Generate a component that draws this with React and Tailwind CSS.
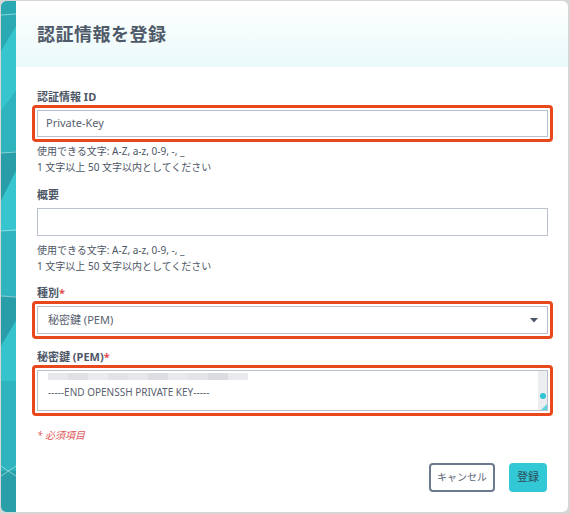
import React from 'react';

const font = { fontFamily: '"Noto Sans", "Noto Sans CJK JP", sans-serif' };

// decorative teal band on the left edge of the dialog
const SideBand = () => (
  <svg width="15" height="511" viewBox="0 0 15 511" className="block shrink-0">
    <rect width="15" height="511" fill="#2fb6c0" />
    <polygon points="0,0 15,0 15,30 0,50" fill="#2aa9b3" />
    <polygon points="0,50 15,25 15,90 0,110" fill="#36c4cd" />
    <polygon points="0,110 15,90 15,150 0,152" fill="#2fb3bd" />
    <polygon points="0,152 15,150 15,170 0,200" fill="#2a9ea8" />
    <polygon points="0,200 15,170 15,230 0,230" fill="#37c6cf" />
    <polygon points="0,230 15,230 15,295 0,295" fill="#30b4be" />
    <polygon points="0,295 15,295 15,320 0,345" fill="#2a9ea8" />
    <polygon points="0,345 15,320 15,380 0,380" fill="#36c3cc" />
    <polygon points="0,380 15,380 15,470 0,470" fill="#2fb3bd" />
    <polygon points="0,470 15,470 15,511 0,511" fill="#2a9fa9" />
    <line x1="0" y1="14" x2="15" y2="13" stroke="#bff0f2" strokeWidth="0.6" />
    <line x1="0" y1="152" x2="15" y2="151" stroke="#bff0f2" strokeWidth="0.6" />
    <line x1="0" y1="230" x2="15" y2="229" stroke="#bff0f2" strokeWidth="0.6" />
    <line x1="0" y1="295" x2="15" y2="296" stroke="#bff0f2" strokeWidth="0.6" />
    <line x1="0" y1="465" x2="15" y2="475" stroke="#bff0f2" strokeWidth="0.6" />
    <line x1="0" y1="475" x2="15" y2="465" stroke="#bff0f2" strokeWidth="0.6" />
  </svg>
);

const Label = ({ children, required }) => (
  <div className="text-[11px] leading-[16px] font-bold text-[#4d5666]">
    {children}
    {required && <span className="text-[#e0474c]">*</span>}
  </div>
);

const Frame = ({ highlight, children }) => (
  <div
    className={
      'mx-[-5px] border-[3px] rounded-[4px] p-[2px] ' +
      (highlight ? 'border-[#e8481c]' : 'border-transparent')
    }
  >
    {children}
  </div>
);

const Help = () => (
  <div className="mt-[1px] text-[10px] leading-[16px] text-[#4d5666]">
    <div>使用できる文字: A-Z, a-z, 0-9, -, _</div>
    <div>1 文字以上 50 文字以内としてください</div>
  </div>
);

const blurBlocks = ['#e6e8eb', '#dfe1e5', '#e9ebee', '#e1e3e7', '#e5e7ea', '#dcdee3', '#e7e9ec', '#e2e4e8', '#dadce1', '#e8eaed'];

export default function App() {
  return (
    <div className="w-[570px] h-[514px] bg-[#d6d6d6] pt-[1px] pl-[1px] pr-[2px] pb-[2px]" style={font}>
      <div className="flex h-[511px] bg-white rounded-[6px] overflow-hidden">
        <SideBand />
        <div className="flex-1 flex flex-col">
          <div className="h-[66px] flex items-center px-[21px] bg-gradient-to-b from-white to-[#eaf9fa]">
            <h1 className="text-[18px] font-bold text-[#4f5a69] tracking-[0.5px]">認証情報を登録</h1>
          </div>

          <div className="px-[21px] pr-[20px]">
            <div className="mt-[22px]">
              <Label>認証情報 ID</Label>
              <Frame highlight>
                <div className="h-[27px] border border-[#b9c1cd] flex items-center pl-[8px] text-[11px] text-[#5a6270]">
                  Private-Key
                </div>
              </Frame>
              <Help />
            </div>

            <div className="mt-[12px]">
              <Label>概要</Label>
              <Frame>
                <div className="h-[28px] border border-[#b9c1cd]" />
              </Frame>
              <Help />
            </div>

            <div className="mt-[11px]">
              <Label required>種別</Label>
              <Frame highlight>
                <div className="h-[28px] border border-[#b9c1cd] flex items-center justify-between pl-[10px] pr-[9px] text-[11px] text-[#5a6270]">
                  <span>秘密鍵 (PEM)</span>
                  <svg width="8" height="5" viewBox="0 0 8 5">
                    <polygon points="0,0 8,0 4,4.5" fill="#4a5568" />
                  </svg>
                </div>
              </Frame>
            </div>

            <div className="mt-[10px]">
              <Label required>秘密鍵 (PEM)</Label>
              <Frame highlight>
                <div className="h-[41px] border border-[#b9c1cd] flex">
                  <div className="flex-1 pl-[10px] pt-[2px]">
                    <div className="flex h-[7px]">
                      {blurBlocks.map((c, i) => (
                        <div key={i} className="w-[20px] h-[7px]" style={{ background: c }} />
                      ))}
                    </div>
                    <div className="mt-[6px] text-[10px] leading-[12px] text-[#5a6270]">
                      -----END OPENSSH PRIVATE KEY-----
                    </div>
                  </div>
                  <div className="w-[9px] bg-[#ebedf0] relative">
                    <div className="absolute left-[2px] top-[22px] w-[6px] h-[6px] rounded-full bg-[#2ec5d3]" />
                    <svg className="absolute right-0 bottom-0" width="6" height="6" viewBox="0 0 6 6">
                      <polygon points="6,0 6,6 0,6" fill="#5fd3de" />
                    </svg>
                  </div>
                </div>
              </Frame>
            </div>

            <div className="mt-[11px] text-[10px] leading-[16px] italic text-[#e05a5a]">* 必須項目</div>

            <div className="mt-[20px] flex justify-end gap-[14px] pr-[1px]">
              <button className="h-[29px] w-[66px] border-2 border-[#6b7a8e] rounded-[4px] text-[10px] text-[#5a6474] bg-white">
                キャンセル
              </button>
              <button className="h-[29px] w-[38px] rounded-[4px] text-[11px] text-[#2f4a5a] bg-[#33c8d5]">
                登録
              </button>
            </div>
          </div>
        </div>
      </div>
    </div>
  );
}
